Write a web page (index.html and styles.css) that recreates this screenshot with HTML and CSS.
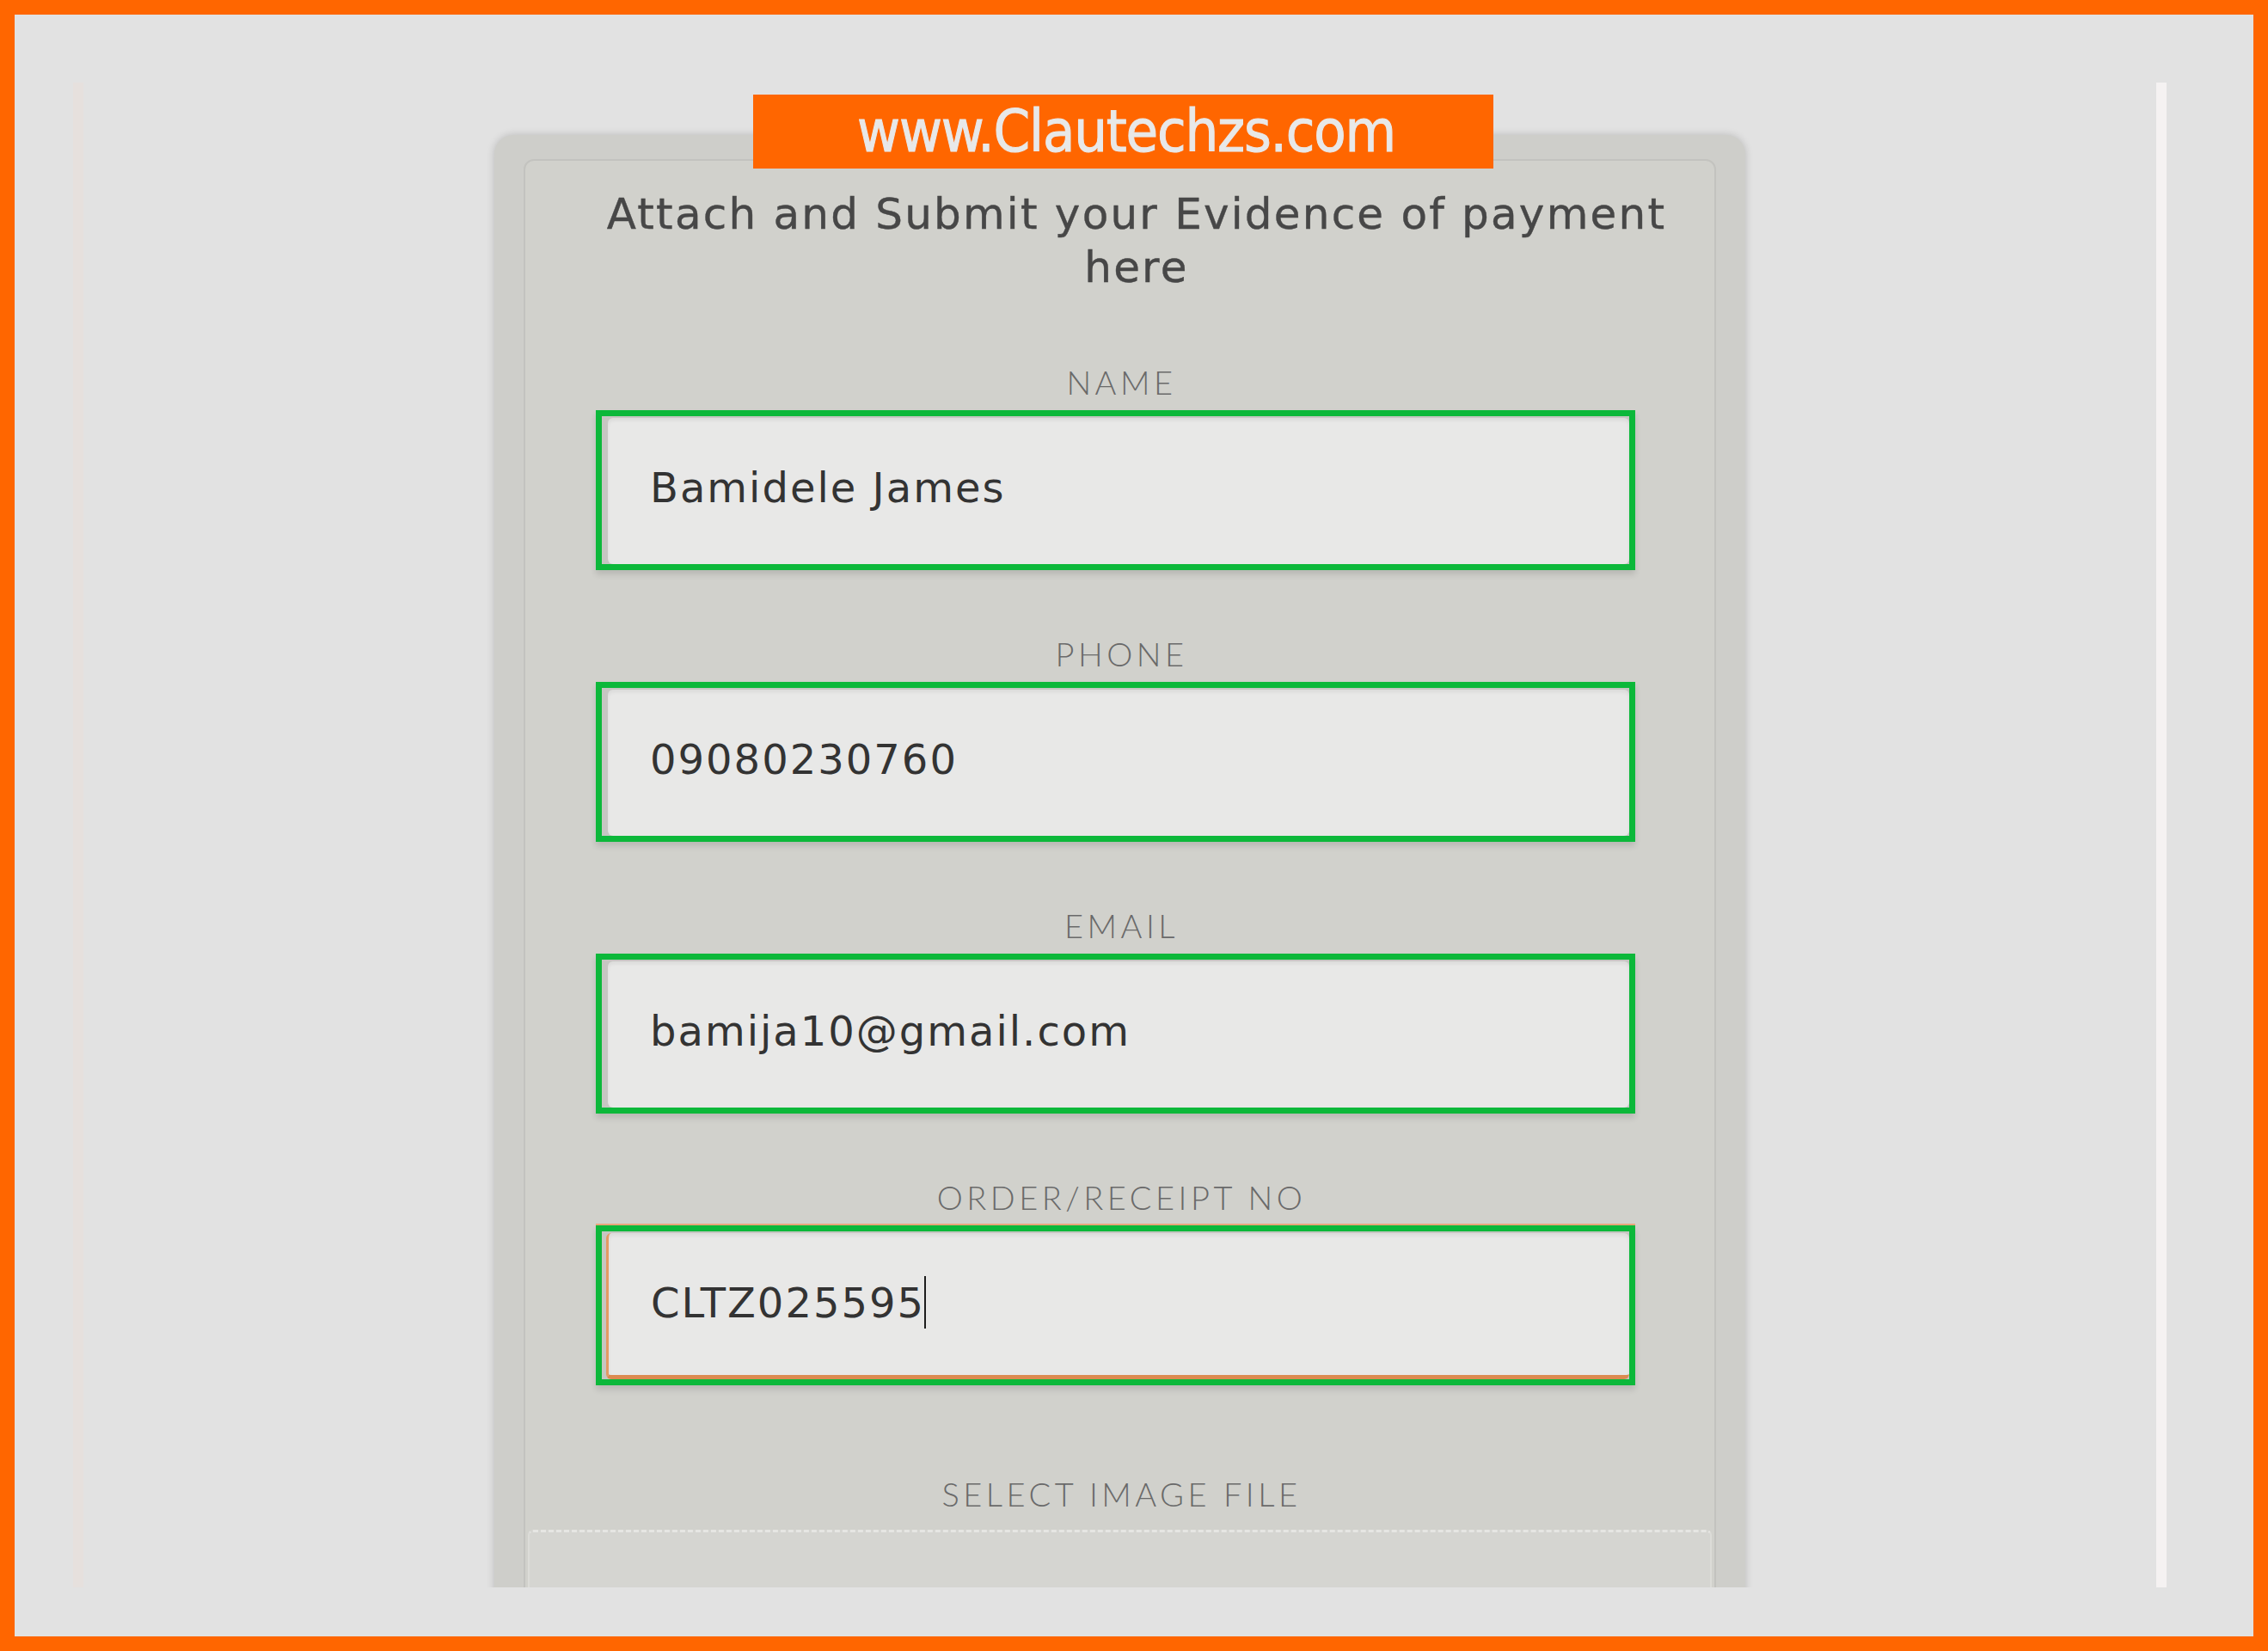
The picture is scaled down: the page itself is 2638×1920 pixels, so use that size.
FILE: index.html
```html
<!DOCTYPE html>
<html lang="en">
<head>
<meta charset="utf-8">
<title>Evidence of payment</title>
<link rel="stylesheet" href="styles.css">
</head>
<body>
<div class="frame">
  <div class="screen">
    <div class="card">
      <div class="banner">www.Clautechzs.com</div>
      <div class="panel">
        <h1 class="title">Attach and Submit your Evidence of payment here</h1>

        <div class="field">
          <div class="label">NAME</div>
          <div class="box"><div class="input">Bamidele James</div></div>
        </div>

        <div class="field">
          <div class="label">PHONE</div>
          <div class="box"><div class="input">09080230760</div></div>
        </div>

        <div class="field">
          <div class="label">EMAIL</div>
          <div class="box"><div class="input">bamija10@gmail.com</div></div>
        </div>

        <div class="field">
          <div class="label">ORDER/RECEIPT NO</div>
          <div class="box box-focus"><div class="input input-focus">CLTZ025595<span class="caret"></span></div></div>
        </div>

        <div class="field field-file">
          <div class="label">SELECT IMAGE FILE</div>
          <div class="dropzone"></div>
        </div>
      </div>
    </div>
  </div>
</div>
</body>
</html>
```
FILE: styles.css
```css
html, body {
  margin: 0;
  padding: 0;
}

.frame {
  width: 2638px;
  height: 1920px;
  box-sizing: border-box;
  border: 17px solid #ff6600;
  background: #e2e2e2;
  overflow: hidden;
}

.screen {
  margin: 79px 0 0 68px;
  width: 2435px;
  height: 1750px;
  box-sizing: border-box;
  border-left: 12px solid #e6e0dd;
  border-right: 12px solid #f5f2f2;
  overflow: hidden;
}

.card {
  position: relative;
  width: 1455px;
  margin: 61px auto 0;
  box-sizing: border-box;
  padding: 28px 34px 0 34px;
  background: #cececa;
  border-radius: 22px 22px 0 0;
  box-shadow: 0 0 10px rgba(0, 0, 0, 0.18);
  min-height: 1800px;
}

.banner {
  position: absolute;
  left: 301px;
  top: -47px;
  width: 861px;
  height: 86px;
  box-sizing: border-box;
  padding-left: 7px;
  background: #ff6600;
  color: #e8e8e8;
  font-family: "DejaVu Sans", sans-serif;
  font-stretch: condensed;
  font-size: 68px;
  letter-spacing: -1.2px;
  line-height: 86px;
  text-align: center;
  -webkit-text-stroke: 1px #e8e8e8;
  z-index: 2;
}

.panel {
  background: #d1d1cc;
  border: 2px solid #c3c3bf;
  border-radius: 12px;
  padding-top: 31px;
  min-height: 1760px;
}

.title {
  margin: 0;
  padding: 0 21px 0 60px;
  font-family: "DejaVu Sans", sans-serif;
  font-weight: normal;
  font-size: 50px;
  line-height: 62px;
  letter-spacing: 2.2px;
  color: #474747;
  -webkit-text-stroke: 0.4px #474747;
  text-align: center;
}

.field {
  margin-top: 82px;
  display: flex;
  flex-direction: column;
}

.field + .field {
  margin-top: 77px;
}

.field.field-file {
  margin-top: 106px;
}

.label {
  height: 40px;
  font-family: "Lato", sans-serif;
  font-weight: 300;
  font-size: 38px;
  line-height: 40px;
  letter-spacing: 4.5px;
  padding-left: 4px;
  color: #6a6a6a;
  text-align: center;
}

.box {
  margin: 13px 92px 0 82px;
  height: 186px;
  box-sizing: border-box;
  border: 7px solid #0cb83a;
  background: #c6c6c2;
  display: flex;
  box-shadow: 0 5px 7px rgba(0, 0, 0, 0.12);
}

.box-focus {
  box-shadow: 0 -2px 0 #e9a57a, 0 5px 7px rgba(0, 0, 0, 0.12);
}

.input {
  flex: 1;
  margin-left: 7px;
  margin-top: 2px;
  border-radius: 6px;
  background: #e8e8e7;
  box-shadow: inset 0 3px 4px rgba(0, 0, 0, 0.06);
  display: flex;
  align-items: center;
  padding-left: 49px;
  padding-bottom: 9px;
  font-family: "DejaVu Sans", sans-serif;
  font-size: 48px;
  letter-spacing: 2px;
  color: #333333;
}

.input-focus {
  margin-left: 5px;
  border-left: 3px solid #e39a63;
  border-bottom: 5px solid #dc8a50;
  padding-bottom: 4px;
}

.caret {
  display: inline-block;
  width: 2px;
  height: 61px;
  margin-left: -1px;
  background: #1e1e1e;
  align-self: center;
}

.dropzone {
  margin: 22px 3px 0;
  height: 200px;
  background: #d5d5d1;
  border-top: 3px dashed #e6e6e3;
  border-left: 2px solid #dcdcd8;
  border-right: 2px solid #dcdcd8;
  border-radius: 6px 6px 0 0;
}
```
